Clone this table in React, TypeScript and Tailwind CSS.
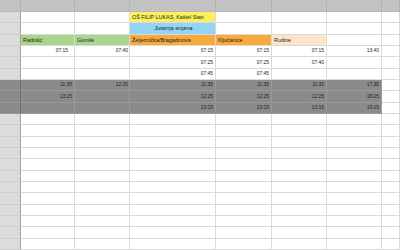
import React from 'react';

type Cell = { t?: string; bg?: string; align?: 'l' | 'r' | 'c'; pr?: string };

const COLS = 'grid-cols-[21px_54px_55px_86px_56px_55px_55px_1fr]';

const YELLOW = 'bg-[#fcf05f]';
const BLUE = 'bg-[#92d5f4]';
const GREEN = 'bg-[#a9d68c]';
const ORANGE = 'bg-[#f9aa3c]';
const PEACH = 'bg-[#fde4ca]';

const r = (t: string, pr?: string): Cell => ({ t, align: 'r', pr });

// 7 data columns per row
const rows: { cells: Cell[]; dark?: boolean }[] = [
  { cells: [{}, {}, { t: 'OŠ FILIP LUKAS, Kaštel Stari', bg: YELLOW }, {}, {}, {}, {}] },
  { cells: [{}, {}, { t: 'Jutarnja smjena', bg: BLUE, align: 'c' }, {}, {}, {}, {}] },
  {
    cells: [
      { t: 'Radošić', bg: GREEN },
      { t: 'Gomile', bg: GREEN },
      { t: 'Željeznička/Bragadinova', bg: ORANGE },
      { t: 'Ključanice', bg: ORANGE },
      { t: 'Rudine', bg: PEACH },
      {},
      {},
    ],
  },
  { cells: [r('07:15', 'pr-[6px]'), r('07:40', 'pr-[1px]'), r('07:15'), r('07:15'), r('07:15'), r('13:40'), {}] },
  { cells: [{}, {}, r('07:25'), r('07:25'), r('07:40'), {}, {}] },
  { cells: [{}, {}, r('07:45'), r('07:45'), {}, {}, {}] },
  { dark: true, cells: [r('11:35'), r('12:25', 'pr-[1px]'), r('11:35'), r('11:35'), r('11:35'), r('17:35'), {}] },
  { dark: true, cells: [r('13:15'), {}, r('12:25'), r('12:25'), r('12:25'), r('18:25'), {}] },
  { dark: true, cells: [{}, {}, r('13:15'), r('13:15'), r('13:15'), r('19:15'), {}] },
];

const EMPTY_ROWS = 12;

function Row({ cells, dark }: { cells: Cell[]; dark?: boolean }) {
  return (
    <div className={`grid ${COLS} h-[11.33px]`}>
      <div
        className={`border-r border-b ${
          dark ? 'bg-[#8a8a8a] border-r-[#6f6f6f] border-b-[#979797]' : 'bg-[#dcdcdc] border-r-[#a3a3a3] border-b-[#cfcfcf]'
        }`}
      />
      {cells.map((c, i) => {
        const last = i === cells.length - 1;
        const bg = c.bg ? c.bg : dark && !last ? 'bg-[#8a8a8a]' : 'bg-white';
        const line = dark && !last ? 'border-[#9a9a9a]' : 'border-[#dadada]';
        const align = c.align === 'r' ? 'justify-end' : c.align === 'c' ? 'justify-center' : 'justify-start';
        const pad = c.align === 'r' ? c.pr ?? 'pr-[2px]' : 'pl-[2px]';
        const size = c.align === 'r' ? 'text-[4.9px]' : 'text-[5.4px]';
        return (
          <div
            key={i}
            className={`${bg} ${line} border-r border-b flex items-center ${align} ${pad} ${size} pt-[1px] overflow-visible whitespace-nowrap leading-none text-[#222]`}
          >
            {c.t}
          </div>
        );
      })}
    </div>
  );
}

export default function App() {
  return (
    <div className="w-[400px] h-[250px] overflow-hidden bg-white font-['Liberation_Sans',Arial,sans-serif]">
      {/* column header strip */}
      <div className={`grid ${COLS} h-[12px] bg-[#c3c3c3]`}>
        {Array.from({ length: 8 }).map((_, i) => (
          <div key={i} className="border-r border-[#b3b3b3] border-b border-b-[#b8b8b8]" />
        ))}
      </div>
      {rows.map((row, i) => (
        <Row key={i} cells={row.cells} dark={row.dark} />
      ))}
      {Array.from({ length: EMPTY_ROWS }).map((_, i) => (
        <Row key={'e' + i} cells={[{}, {}, {}, {}, {}, {}, {}]} />
      ))}
    </div>
  );
}
